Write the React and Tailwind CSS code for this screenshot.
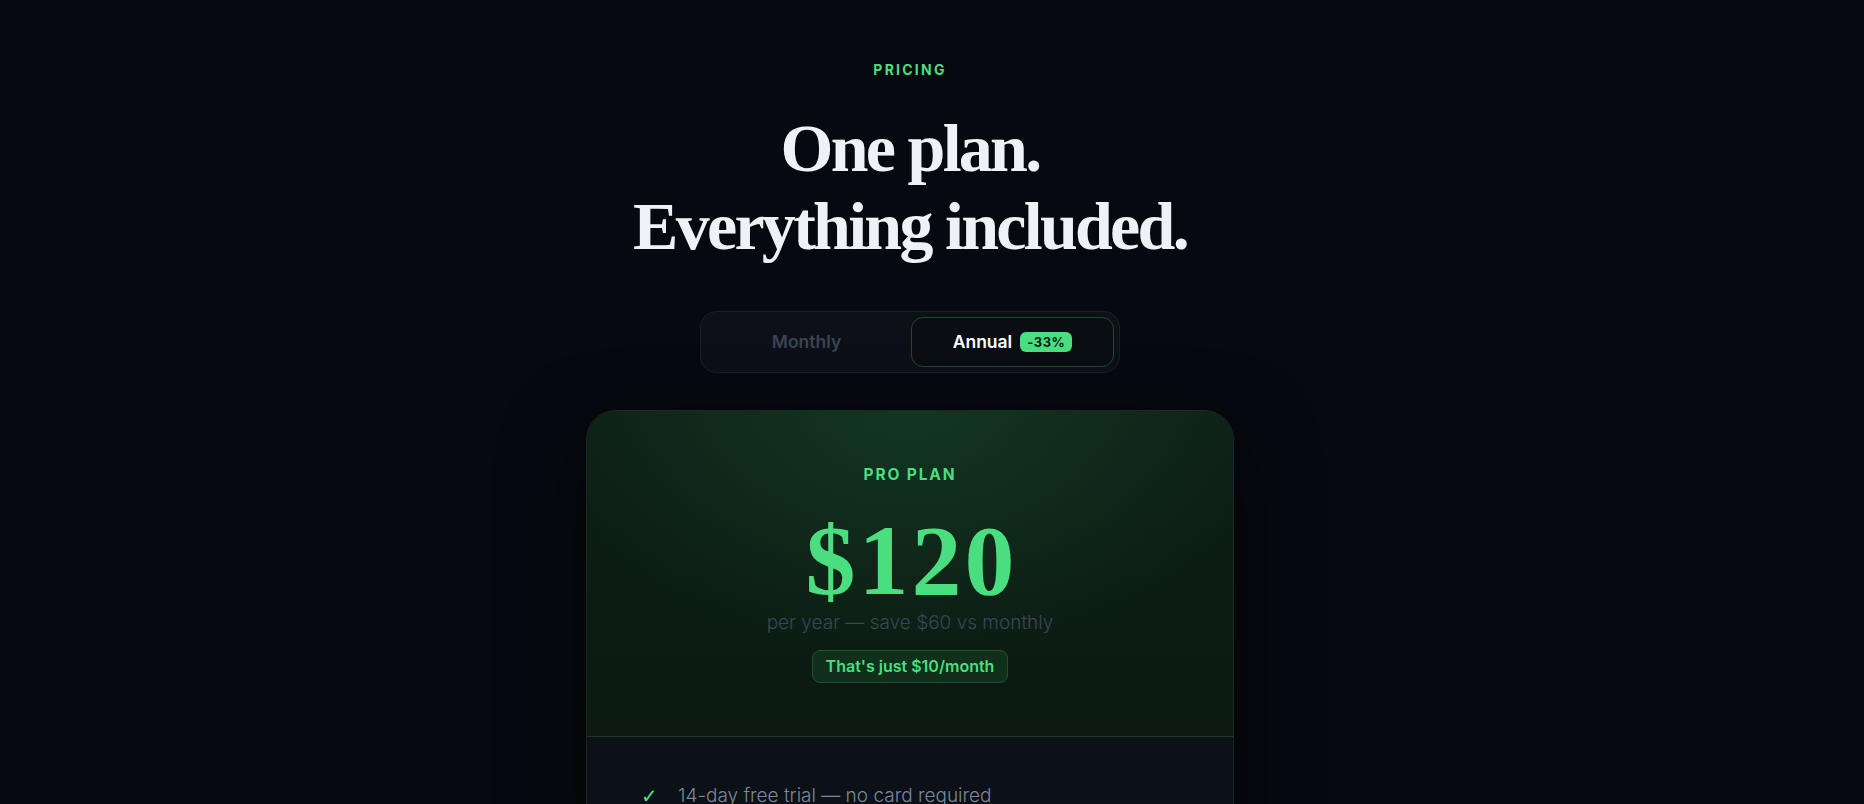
import React from "react";

export default function App() {
  const sans = { fontFamily: "Inter, 'Noto Sans', sans-serif" };
  const serif = { fontFamily: "'Liberation Serif', 'DejaVu Serif', serif" };
  return (
    <div className="min-h-screen w-full bg-[#06090f] overflow-hidden" style={sans}>
      <div className="flex flex-col items-center pt-[61px] pr-[44px]">
        <div className="text-[14px] font-bold tracking-[0.16em] text-[#4ade80] leading-[18px]">PRICING</div>
        <h1
          className="mt-[30px] text-center text-[68px] font-bold leading-[78px] tracking-[-0.04em] text-[#eef2f7]"
          style={serif}
        >
          One plan.
          <br />
          Everything included.
        </h1>

        <div className="mt-[46px] flex w-[420px] gap-1 rounded-2xl border border-[#1a1f27] bg-[#0d1117] p-[5px]">
          <button className="flex h-[50px] flex-1 items-center justify-center rounded-xl text-[17.5px] font-semibold text-[#3a4454]">
            Monthly
          </button>
          <button className="flex h-[50px] flex-1 items-center justify-center gap-2 rounded-xl border border-[#1e4a2e] bg-[#0a0e13] text-[17.5px] font-semibold text-white">
            Annual
            <span className="rounded-md bg-[#4ade80] px-[7px] py-[1px] text-[13px] font-bold leading-[18px] tracking-[0.04em] text-[#0a1a10]">
              -33%
            </span>
          </button>
        </div>

        <div className="mt-[37px] w-[648px] overflow-hidden rounded-[30px] border border-[#1a2a22] bg-[#0c1118] shadow-[0_30px_80px_rgba(0,0,0,0.6)]">
          <div
            className="flex flex-col items-center border-b border-[#1d3a26] pt-[55px] pb-[53px]"
            style={{
              background:
                "radial-gradient(ellipse 360px 260px at 50% 0%, rgba(34,120,62,0.26), rgba(34,120,62,0) 100%), linear-gradient(180deg, #0e2017 0%, #0b1911 100%)",
            }}
          >
            <div className="text-[15.5px] font-bold tracking-[0.12em] leading-[18px] text-[#4ade80]">PRO PLAN</div>
            <div className="mt-[24px] pl-[3px] text-[100px] font-bold leading-[106px] tracking-[0.03em] text-[#4ade80]" style={serif}>
              $120
            </div>
            <div className="mt-[-3px] text-[19px] font-light leading-[24px] text-[#3b4658]">
              per year — save $60 vs monthly
            </div>
            <div className="mt-[15px] rounded-lg border border-[#1f5232] bg-[#10301c] px-[13px] py-[5px] text-[16px] font-semibold leading-[21px] text-[#4ade80]">
              That's just $10/month
            </div>
          </div>
          <div className="px-[54px] pt-[45px] pb-[40px]">
            <ul className="flex flex-col gap-4">
              <li className="flex items-center gap-[20px] text-[19px] font-light leading-[28px] text-[#7b889b]">
                <span className="text-[20px] text-[#4ade80]" style={{ fontFamily: "'DejaVu Sans', sans-serif" }}>✓</span>
                14-day free trial — no card required
              </li>
            </ul>
          </div>
        </div>
      </div>
    </div>
  );
}
